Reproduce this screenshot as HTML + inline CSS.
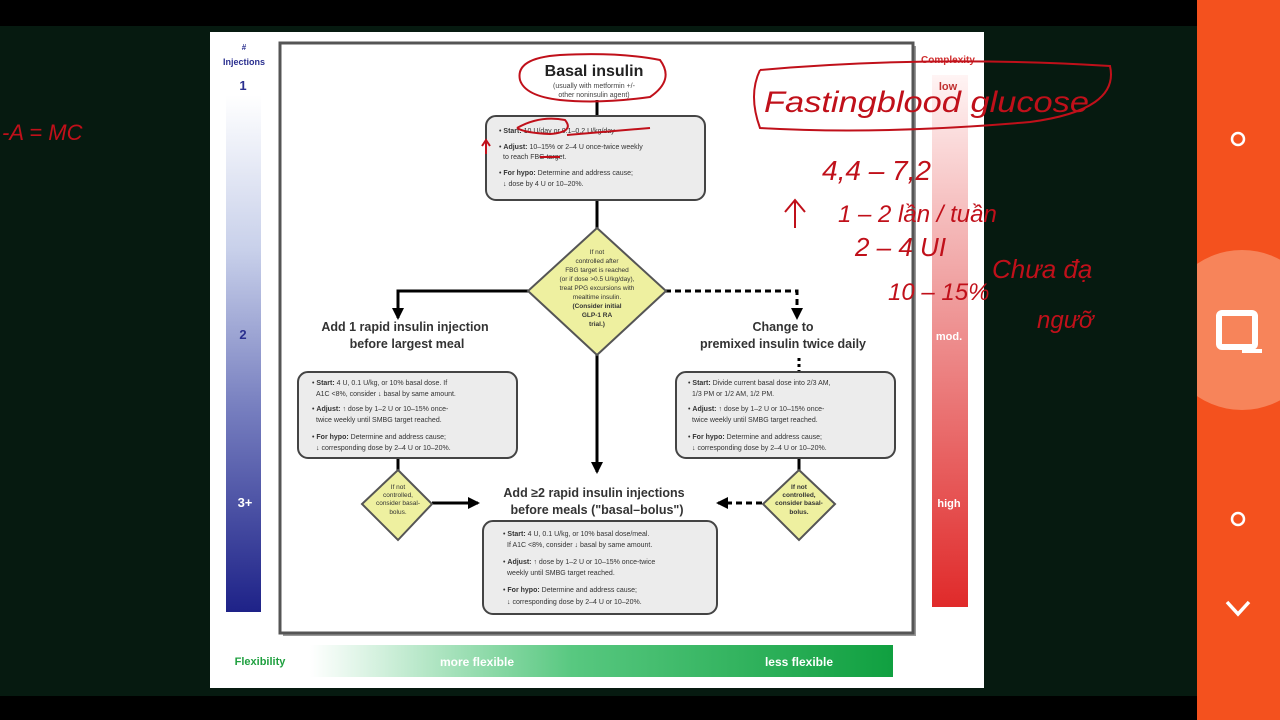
<!DOCTYPE html>
<html><head><meta charset="utf-8"><style>
html,body{margin:0;padding:0;width:1280px;height:720px;overflow:hidden;background:#041208}
svg{display:block}
text{font-family:"Liberation Sans",sans-serif}
</style></head><body>
<svg width="1280" height="720" viewBox="0 0 1280 720" xmlns="http://www.w3.org/2000/svg">
<defs>
<linearGradient id="lb" x1="0" y1="0" x2="0" y2="1"><stop offset="0" stop-color="#ffffff"/><stop offset="0.3" stop-color="#c8d0ea"/><stop offset="0.6" stop-color="#7880c0"/><stop offset="1" stop-color="#1e2288"/></linearGradient>
<linearGradient id="rb" x1="0" y1="0" x2="0" y2="1"><stop offset="0" stop-color="#fff4f4"/><stop offset="0.4" stop-color="#f0a0a0"/><stop offset="1" stop-color="#e02a2a"/></linearGradient>
<linearGradient id="gb" x1="0" y1="0" x2="1" y2="0"><stop offset="0" stop-color="#ffffff"/><stop offset="0.45" stop-color="#58c880"/><stop offset="1" stop-color="#10a040"/></linearGradient>
<marker id="ar" markerUnits="userSpaceOnUse" markerWidth="12" markerHeight="12" refX="10" refY="6" orient="auto"><path d="M0,0 L12,6 L0,12 z" fill="#000"/></marker>
<clipPath id="pc"><rect x="1197" y="0" width="83" height="720"/></clipPath>
</defs>
<rect x="0" y="0" width="1280" height="26" fill="#000"/>
<rect x="0" y="696" width="1280" height="24" fill="#000"/>
<rect x="0" y="26" width="1197" height="670" fill="#061a10"/>
<rect x="210" y="32" width="774" height="656" fill="#fff"/>
<text x="244" y="50" font-size="8" text-anchor="middle" fill="#2a2f8f" font-weight="bold">#</text>
<text x="244" y="65" font-size="9" text-anchor="middle" fill="#2a2f8f" font-weight="bold">Injections</text>
<rect x="226" y="95" width="35" height="517" fill="url(#lb)"/>
<text x="243" y="90" font-size="13" text-anchor="middle" fill="#2a2f8f" font-weight="bold">1</text>
<text x="243" y="339" font-size="13" text-anchor="middle" fill="#2a2f8f" font-weight="bold">2</text>
<text x="245" y="507" font-size="13" text-anchor="middle" fill="#fff" font-weight="bold">3+</text>
<text x="948" y="63" font-size="10" text-anchor="middle" fill="#d03030" font-weight="bold">Complexity</text>
<rect x="932" y="75" width="36" height="532" fill="url(#rb)"/>
<text x="948" y="90" font-size="11" text-anchor="middle" fill="#c03030" font-weight="bold">low</text>
<text x="949" y="340" font-size="11" text-anchor="middle" fill="#fff" font-weight="bold">mod.</text>
<text x="949" y="507" font-size="11" text-anchor="middle" fill="#fff" font-weight="bold">high</text>
<text x="260" y="665" font-size="11" text-anchor="middle" fill="#20a040" font-weight="bold">Flexibility</text>
<rect x="310" y="645" width="583" height="32" fill="url(#gb)"/>
<text x="477" y="666" font-size="12" text-anchor="middle" fill="#fff" font-weight="bold">more flexible</text>
<text x="799" y="666" font-size="12" text-anchor="middle" fill="#fff" font-weight="bold">less flexible</text>
<rect x="283" y="46" width="633" height="590" fill="#999"/>
<rect x="280" y="43" width="633" height="590" fill="#fff" stroke="#555" stroke-width="3"/>
<g stroke="#000" stroke-width="3" fill="none">
<line x1="597" y1="100" x2="597" y2="116"/>
<line x1="597" y1="200" x2="597" y2="228"/>
<line x1="597" y1="355" x2="597" y2="472" marker-end="url(#ar)"/>
<polyline points="528,291 398,291 398,318" marker-end="url(#ar)"/>
<polyline points="665,291 797,291 797,318" stroke-dasharray="6,4" marker-end="url(#ar)"/>
<line x1="398" y1="458" x2="398" y2="470"/>
<line x1="432" y1="503" x2="478" y2="503" marker-end="url(#ar)"/>
<line x1="762" y1="503" x2="718" y2="503" stroke-dasharray="6,4" marker-end="url(#ar)"/>
<line x1="799" y1="358" x2="799" y2="372" stroke-dasharray="3,3"/>
<line x1="799" y1="458" x2="799" y2="470"/>
</g>
<text x="594" y="76" font-size="16" text-anchor="middle" font-weight="bold" fill="#222">Basal insulin</text>
<text x="594" y="88" font-size="7" text-anchor="middle" fill="#444">(usually with metformin +/-</text>
<text x="594" y="97" font-size="7" text-anchor="middle" fill="#444">other noninsulin agent)</text>
<g fill="#ececec" stroke="#444" stroke-width="2">
<rect x="486" y="116" width="219" height="84" rx="10"/>
<rect x="298" y="372" width="219" height="86" rx="10"/>
<rect x="676" y="372" width="219" height="86" rx="10"/>
<rect x="483" y="521" width="234" height="93" rx="10"/>
</g>
<g font-size="7" fill="#333">
<text x="499" y="133">• <tspan font-weight="bold">Start:</tspan> 10 U/day or 0.1–0.2 U/kg/day</text>
<text x="499" y="149">• <tspan font-weight="bold">Adjust:</tspan> 10–15% or 2–4 U once-twice weekly</text>
<text x="503" y="159">to reach FBG target.</text>
<text x="499" y="175">• <tspan font-weight="bold">For hypo:</tspan> Determine and address cause;</text>
<text x="503" y="186">↓ dose by 4 U or 10–20%.</text>
<text x="312" y="385">• <tspan font-weight="bold">Start:</tspan> 4 U, 0.1 U/kg, or 10% basal dose. If</text>
<text x="316" y="396">A1C &lt;8%, consider ↓ basal by same amount.</text>
<text x="312" y="411">• <tspan font-weight="bold">Adjust:</tspan> ↑ dose by 1–2 U or 10–15% once-</text>
<text x="316" y="422">twice weekly until SMBG target reached.</text>
<text x="312" y="439">• <tspan font-weight="bold">For hypo:</tspan> Determine and address cause;</text>
<text x="316" y="450">↓ corresponding dose by 2–4 U or 10–20%.</text>
<text x="688" y="385">• <tspan font-weight="bold">Start:</tspan> Divide current basal dose into 2/3 AM,</text>
<text x="692" y="396">1/3 PM or 1/2 AM, 1/2 PM.</text>
<text x="688" y="411">• <tspan font-weight="bold">Adjust:</tspan> ↑ dose by 1–2 U or 10–15% once-</text>
<text x="692" y="422">twice weekly until SMBG target reached.</text>
<text x="688" y="439">• <tspan font-weight="bold">For hypo:</tspan> Determine and address cause;</text>
<text x="692" y="450">↓ corresponding dose by 2–4 U or 10–20%.</text>
<text x="503" y="536">• <tspan font-weight="bold">Start:</tspan> 4 U, 0.1 U/kg, or 10% basal dose/meal.</text>
<text x="507" y="547">If A1C &lt;8%, consider ↓ basal by same amount.</text>
<text x="503" y="564">• <tspan font-weight="bold">Adjust:</tspan> ↑ dose by 1–2 U or 10–15% once-twice</text>
<text x="507" y="575">weekly until SMBG target reached.</text>
<text x="503" y="592">• <tspan font-weight="bold">For hypo:</tspan> Determine and address cause;</text>
<text x="507" y="604">↓ corresponding dose by 2–4 U or 10–20%.</text>
</g>
<g font-size="12.5" font-weight="bold" fill="#333" text-anchor="middle">
<text x="405" y="331">Add 1 rapid insulin injection</text>
<text x="407" y="348">before largest meal</text>
<text x="783" y="331">Change to</text>
<text x="783" y="348">premixed insulin twice daily</text>
<text x="594" y="497">Add ≥2 rapid insulin injections</text>
<text x="597" y="514">before meals ("basal–bolus")</text>
</g>
<g fill="#eef0a0" stroke="#555" stroke-width="2">
<polygon points="597,228 666,291 597,355 528,291"/>
<polygon points="398,470 432,504 398,540 362,504"/>
<polygon points="799,470 835,504 799,540 763,504"/>
</g>
<g font-size="6.5" fill="#333" text-anchor="middle">
<text x="597" y="254">If not</text>
<text x="597" y="263">controlled after</text>
<text x="597" y="272">FBG target is reached</text>
<text x="597" y="281">(or if dose &gt;0.5 U/kg/day),</text>
<text x="597" y="290">treat PPG excursions with</text>
<text x="597" y="299">mealtime insulin.</text>
<text x="597" y="308" font-weight="bold">(Consider initial</text>
<text x="597" y="317" font-weight="bold">GLP-1 RA</text>
<text x="597" y="326" font-weight="bold">trial.)</text>
<text x="398" y="489">If not</text>
<text x="398" y="497">controlled,</text>
<text x="398" y="505">consider basal-</text>
<text x="398" y="514">bolus.</text>
<text x="799" y="489" font-weight="bold">If not</text>
<text x="799" y="497" font-weight="bold">controlled,</text>
<text x="799" y="505" font-weight="bold">consider basal-</text>
<text x="799" y="514" font-weight="bold">bolus.</text>
</g>
<g stroke="#c0101a" stroke-width="2" fill="none">
<path d="M520,80 Q515,58 560,55 Q620,52 660,60 Q675,80 650,97 Q600,104 560,100 Q525,96 520,80"/>
<path d="M517,128 Q540,115 565,120 Q575,132 550,134 Q525,133 517,128"/>
<path d="M567,135 L650,128"/>
<path d="M540,157 L560,157"/>
<path d="M486,140 l0,14 M482,146 l4,-6 4,6"/>
<path d="M760,70 Q930,55 1110,66 Q1120,110 1030,122 Q880,135 760,128 Q748,95 760,70"/>
<path d="M795,200 L795,228 M785,212 L795,200 805,212"/>
</g>
<g fill="#c0101a" font-family="Liberation Sans" font-style="italic">
<text x="764" y="112" font-size="30" textLength="325" lengthAdjust="spacingAndGlyphs">Fastingblood glucose</text>
<text x="822" y="180" font-size="28">4,4 – 7,2</text>
<text x="838" y="222" font-size="24">1 – 2 lần / tuần</text>
<text x="855" y="256" font-size="26">2 – 4 UI</text>
<text x="888" y="300" font-size="24">10 – 15%</text>
<text x="992" y="278" font-size="26">Chưa đạ</text>
<text x="1037" y="328" font-size="24">ngưỡ</text>
<text x="2" y="140" font-size="22">-A = MC</text>
</g>
<rect x="1197" y="0" width="83" height="720" fill="#f4511e"/>
<circle cx="1242" cy="330" r="80" fill="#f7845a" clip-path="url(#pc)"/>
<circle cx="1238" cy="139" r="6" fill="none" stroke="#fff" stroke-width="2.5"/>
<circle cx="1238" cy="519" r="6" fill="none" stroke="#fff" stroke-width="2.5"/>
<rect x="1219" y="313" width="36" height="34" rx="3" fill="none" stroke="#fff" stroke-width="6"/>
<path d="M1242,351 L1262,351" stroke="#fff" stroke-width="4"/>
<path d="M1227,602 L1238,614 L1249,602" fill="none" stroke="#fff" stroke-width="3.5"/>
</svg>
</body></html>
